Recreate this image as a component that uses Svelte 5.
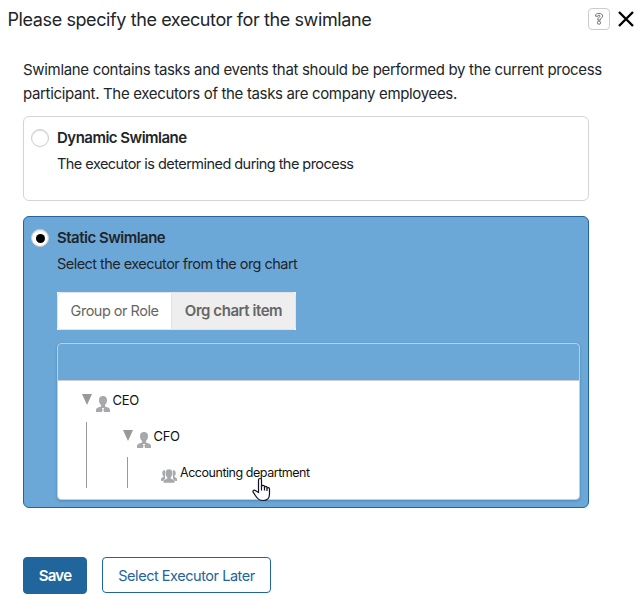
<script>
  const executorTabs = ['Group or Role', 'Org chart item'];
  let mode = $state('static');
  let activeTab = $state('Org chart item');
</script>

{#snippet person()}
  <svg class="person" viewBox="0 0 14 16" aria-hidden="true">
    <path d="M7 0C4.400 0 3 1.600 3 3.900c0 2.300.7 3.800 2 5.100v1.600l-3 1C.7 12.100.2 12.900 0 14v2h6l.6-2.400L5.800 12h2.400l-.8 1.600L8 16h6v-2c-.2-1.100-.7-1.900-2-2.400l-3-1V9c1.300-1.300 2-2.800 2-5.100C11 1.600 9.600 0 7 0z" />
  </svg>
{/snippet}

<div class="dialog">
  <header>
    <h1>Please specify the executor for the swimlane</h1>
    <button class="help" aria-label="Help">
      <svg width="10" height="14" viewBox="0 0 10 14">
        <path d="M1.500 4.200C1.300 2.200 2.700 1.400 5 1.400s3.600 1 3.600 2.700c0 1.500-1.200 2.100-2.300 2.800v1.200H3.800V6.400C4.700 5.500 6 5.200 6 4.200c0-.7-.5-1-1.100-1-.8 0-1.100.4-1.100 1.200z" />
        <circle cx="5" cy="10.700" r="1.600" />
      </svg>
    </button>
    <button class="close" aria-label="Close">
      <svg width="16" height="16" viewBox="0 0 16 16"><path d="M1 1l14 14M15 1L1 15" /></svg>
    </button>
  </header>

  <p class="intro">
    <span class="line">Swimlane contains tasks and events that should be performed by the current process</span>
    <span class="line second">participant. The executors of the tasks are company employees.</span>
  </p>

  <section class="card dynamic">
    <button class="radio" class:checked={mode === 'dynamic'} aria-label="Dynamic" onclick={() => (mode = 'dynamic')}></button>
    <div class="body">
      <h2>Dynamic Swimlane</h2>
      <p>The executor is determined during the process</p>
    </div>
  </section>

  <section class="card static">
    <button class="radio" class:checked={mode === 'static'} aria-label="Static" onclick={() => (mode = 'static')}></button>
    <div class="body">
      <h2>Static Swimlane</h2>
      <p>Select the executor from the org chart</p>
      <div class="tabs">
        {#each executorTabs as tab}
          <button class:active={activeTab === tab} onclick={() => (activeTab = tab)}>{tab}</button>
        {/each}
      </div>
      <div class="picker">
        <div class="search"></div>
        <div class="tree">
          <div class="node"><i class="arrow"></i>{@render person()}<span>CEO</span></div>
          <div class="children">
            <div class="node"><i class="arrow"></i>{@render person()}<span>CFO</span></div>
            <div class="children inner">
              <div class="node leaf">
                <svg class="group" viewBox="0 0 16 14" aria-hidden="true">
                  <path d="M4.500.9C2.600.7 1.300 2 1.300 4c0 1.400.4 2.200 1.200 3v1L.8 8.700C.2 9 0 9.600 0 10.300V12h4V.9zM11.500.9c1.900-.2 3.200 1.100 3.200 3.100 0 1.400-.4 2.200-1.200 3v1l1.700.7c.6.300.8.900.8 1.600V12h-4V.9z" />
                  <path class="front" d="M8 .1C5.700.1 4.300 1.600 4.300 3.900c0 2 .6 3.300 1.700 4.400v1.200l-2.500 1c-.8.400-1.300 1-1.300 2V14h11.600v-1.500c0-1-.5-1.600-1.300-2l-2.500-1V8.300c1.100-1.100 1.700-2.400 1.700-4.400C11.700 1.600 10.300.1 8 .1z" />
                </svg>
                <span class="dept">Accounting department</span>
                <svg class="cursor" width="19" height="25" viewBox="0 0 19 25" aria-hidden="true">
                  <path d="M6.500 15.500V3c0-2 3-2 3 0v6.500c0-1.600 3-1.600 3 0v1c0-1.500 2.500-1.500 2.500 0v1c0-1.300 2.500-1.300 2.500.4V17c0 4.500-2.400 6.500-6.400 6.500-4 0-5.900-1.900-7.400-4.500l-2.400-3.600c-1.100-2 1-3 2.400-1.600z" />
                  <path class="detail" d="M9.500 9v4.500M12.500 10v3.500M15 11v3" />
                </svg>
              </div>
            </div>
          </div>
        </div>
      </div>
    </div>
  </section>

  <footer>
    <button class="save">Save</button>
    <button class="later">Select Executor Later</button>
  </footer>
</div>

<style>
  :global(body) { background: #fff; }
  .dialog, .dialog * { box-sizing: border-box; }
  .dialog {
    width: 642px; height: 599px; overflow: hidden;
    font: 15px/24px Inter, sans-serif; letter-spacing: -0.32px; color: #212529;
  }
  h1, h2, p { margin: 0; white-space: nowrap; }
  button { font: inherit; letter-spacing: inherit; color: inherit; padding: 0; cursor: pointer; white-space: nowrap; }
  header { display: flex; height: 58px; padding: 8px 8px 0 7.5px; align-items: flex-start; }
  h1 { flex: 1; font-size: 18px; font-weight: 400; line-height: 24px; letter-spacing: -0.4px; }
  .help {
    width: 22px; height: 22px; margin-right: 8px; display: grid; place-items: center;
    border: 1px solid #ccc; border-radius: 4px; background: #fff;
  }
  .help svg { fill: #fff; stroke: #555; stroke-width: .8; }
  .close { width: 16px; height: 16px; margin-top: 3px; border: 0; background: none; }
  .close svg { display: block; stroke: #000; stroke-width: 2.400; }
  .intro { padding-left: 23px; }
  .line { display: block; }
  .second { letter-spacing: -0.34px; }
  .card { display: flex; width: 566px; margin-left: 23px; border: 1px solid #d3d4d5; border-radius: 6px; padding: 9px 8px 0 7px; }
  .dynamic { height: 85px; margin-top: 10px; }
  .static { height: 292px; margin-top: 15px; background: #6ba8d8; border-color: #20669c; }
  .radio {
    flex: none; width: 18px; height: 18px; margin: 3px 8px 0 0; border: 1px solid #ccc;
    border-radius: 50%; background: #fff; box-shadow: inset 0 1px 1px #ddd; display: grid; place-items: center;
  }
  .checked::after { content: ''; width: 9px; height: 9px; border-radius: 50%; background: #000; }
  h2 { font-size: 15px; font-weight: 600; line-height: 24px; letter-spacing: -0.51px; }
  .body { flex: 1; }
  .body p { margin-top: 2px; font-size: 14.5px; letter-spacing: -0.54px; }
  .tabs { display: flex; width: 239px; height: 38px; margin-top: 16px; background: #fff; }
  .tabs button {
    width: 115px; border: 1px solid #e3e3e3; border-radius: 4px 0 0 4px; background: #fff;
    color: #666; font-size: 14.5px; letter-spacing: -0.5px;
  }
  .tabs button + button { width: 124px; border-left: 0; border-radius: 0 4px 4px 0; font-size: 15px; letter-spacing: -0.45px; }
  .tabs .active { background: #eee; font-weight: 600; }
  .picker {
    width: 523px; height: 157px; margin-top: 13px; border: 1px solid #ccc; border-radius: 4px;
    box-shadow: 0 1px 3px #4f86b0; background: #6ba8d8;
  }
  .search { height: 37px; border-bottom: 1px solid #ccc; }
  .tree {
    height: 118px; padding: 10px 0 0 24px; background: #fff; border-radius: 0 0 3px 3px;
    font-size: 13px; line-height: 20px; color: #111;
  }
  .node { display: flex; height: 25px; align-items: flex-start; position: relative; }
  .node span { line-height: 18px; }
  .arrow { width: 10px; height: 11px; margin: 3px 4px 0 0; background: #999; clip-path: polygon(0 0, 100% 0, 50% 100%); }
  .person { width: 14px; height: 16px; margin: 5px 3px 0 -.5px; fill: #a6a8ab; }
  .children { margin: 6px 0 0 4px; border-left: 1px solid #999; height: 66px; padding: 5px 0 0 36px; }
  .inner { height: 31px; padding-left: 33px; padding-top: 5px; margin-top: 5px; }
  .group { width: 16px; height: 14px; margin: 7px 3px 0 0; fill: #a6a8ab; }
  .front { stroke: #fff; stroke-width: .5; }
  .node .dept { font-size: 12.5px; line-height: 22px; letter-spacing: -0.46px; }
  .cursor { position: absolute; left: 90.5px; top: 14.5px; fill: #fff; stroke: #111122; stroke-width: 1.200; }
  .detail { fill: none; }
  footer { display: flex; gap: 15px; margin: 49px 0 0 23px; align-items: flex-start; }
  footer button { border: 1px solid #20669c; border-radius: 4px; height: 36px; width: 169px; background: #fff; color: #20669c; }
  footer .later { padding-top: 1px; font-size: 14.5px; letter-spacing: -0.46px; }
  footer .save { width: 64px; height: 37px; background: #20669c; color: #fff; font-weight: 600; letter-spacing: -0.7px; }
</style>
